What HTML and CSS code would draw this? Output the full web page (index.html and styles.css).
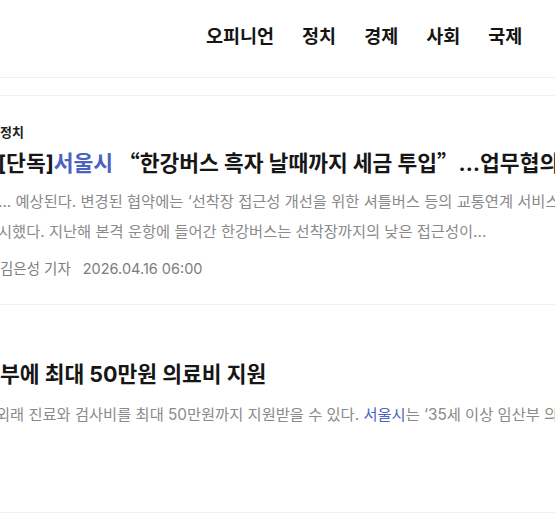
FILE: index.html
```html
<!DOCTYPE html>
<html lang="ko">
<head>
<meta charset="utf-8">
<title>검색 결과</title>
<link rel="stylesheet" href="styles.css">
</head>
<body>
<div class="page">
  <header class="header">
    <nav class="gnb">
      <a class="gnb-item">오피니언</a>
      <a class="gnb-item">정치</a>
      <a class="gnb-item">경제</a>
      <a class="gnb-item">사회</a>
      <a class="gnb-item">국제</a>
    </nav>
  </header>
  <div class="subbar"></div>
  <article class="item item-first">
    <div class="cat">정치</div>
    <h2 class="title">[단독]<em class="hl">서울시</em> <span class="q">“</span>한강버스 흑자 날때까지 세금 투입<span class="q">”</span>…업무협의</h2>
    <p class="summary">... 예상된다. 변경된 협약에는 ‘선착장 접근성 개선을 위한 셔틀버스 등의 교통연계 서비스 확충’을 명<br>시했다. 지난해 본격 운항에 들어간 한강버스는 선착장까지의 낮은 접근성이...</p>
    <div class="byline"><span>김은성 기자</span><span>2026.04.16 06:00</span></div>
  </article>
  <article class="item item-second">
    <h2 class="title">부에 최대 50만원 의료비 지원</h2>
    <p class="summary summary-shift">외래 진료와 검사비를 최대 50만원까지 지원받을 수 있다. <em class="hl">서울시</em>는 ‘35세 이상 임산부 의료비 지원’</p>
  </article>
</div>
</body>
</html>
```
FILE: styles.css
```css
html, body {
  margin: 0;
  padding: 0;
  background: #ffffff;
}
body {
  overflow: hidden;
  font-family: Inter, "Noto Sans CJK KR", sans-serif;
  color: #1a1a1a;
}
.page {
  width: 555px;
}
.header {
  height: 77px;
  display: flex;
  align-items: flex-start;
}
.gnb {
  display: flex;
  gap: 28px;
  padding-left: 206px;
  padding-top: 22px;
}
.gnb-item {
  font-family: "Noto Sans CJK KR", sans-serif;
  font-size: 18.5px;
  font-weight: 700;
  line-height: 26px;
  color: #151515;
  white-space: nowrap;
}
.subbar {
  height: 17px;
  border-top: 1px solid #efefef;
  border-bottom: 1px solid #efefef;
}
.item {
  white-space: nowrap;
  border-bottom: 1px solid #efefef;
}
.item-first {
  padding-top: 26px;
  padding-bottom: 25px;
  margin-left: -2px;
}
.item-second {
  padding-top: 54px;
  padding-bottom: 82px;
}
.cat {
  font-size: 13px;
  font-weight: 600;
  line-height: 20px;
  color: #222;
  padding-left: 2px;
}
.title {
  margin: 5px 0 0;
  font-size: 21.5px;
  font-weight: 700;
  line-height: 30px;
  color: #161616;
}
.q {
  font-family: "Noto Sans CJK KR", sans-serif;
  font-feature-settings: "fwid";
}
.item-second .title {
  margin-top: 0;
}
.hl {
  font-style: normal;
  color: #4a62c2;
}
.summary {
  margin: 9px 0 0;
  font-size: 15.3px;
  line-height: 30px;
  color: #8a8a8a;
}
.summary-shift {
  margin-top: 11px;
  margin-left: -4px;
}
.byline {
  margin-top: 12px;
  display: flex;
  gap: 12px;
  font-size: 14.5px;
  line-height: 20px;
  color: #7d7d7d;
  padding-left: 2px;
}
```
